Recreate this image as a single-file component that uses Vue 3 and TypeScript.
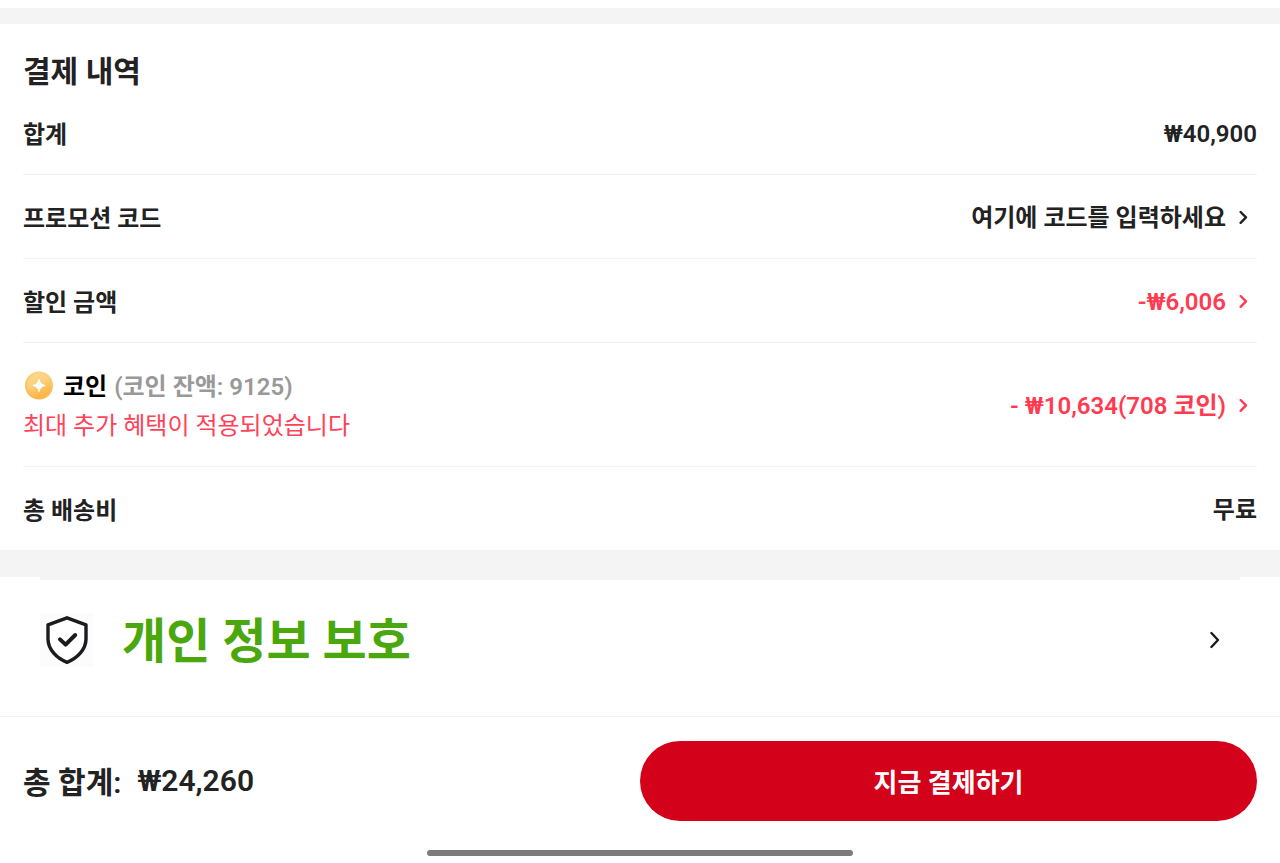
<script setup lang="ts">
interface SummaryRow {
  id: string
  label: string
  value: string
  action?: boolean
  sale?: boolean
  balance?: string
  note?: string
}

const rows: SummaryRow[] = [
  { id: 'subtotal', label: '합계', value: '₩40,900' },
  { id: 'promo', label: '프로모션 코드', value: '여기에 코드를 입력하세요', action: true },
  { id: 'discount', label: '할인 금액', value: '-₩6,006', action: true, sale: true },
  {
    id: 'coins',
    label: '코인',
    value: '- ₩10,634(708 코인)',
    action: true,
    sale: true,
    balance: '(코인 잔액: 9125)',
    note: '최대 추가 혜택이 적용되었습니다',
  },
  { id: 'shipping', label: '총 배송비', value: '무료' },
]
</script>

<template>
  <main class="checkout" lang="ko">
    <div class="band"></div>

    <section class="summary">
      <h1 class="title">결제 내역</h1>
      <div v-for="row in rows" :key="row.id" class="row">
        <div class="info">
          <div :id="`label-${row.id}`" class="label">
            <template v-if="row.balance">
              <svg class="coin" viewBox="0 0 32 32" aria-hidden="true">
                <defs>
                  <linearGradient id="coin-face" x1="0" y1="0" x2="0.4" y2="1">
                    <stop offset="0" stop-color="#fbd992" />
                    <stop offset="0.5" stop-color="#fbd07c" />
                    <stop offset="1" stop-color="#fcb646" />
                  </linearGradient>
                  <linearGradient id="coin-rim" x1="0" y1="0" x2="0" y2="1">
                    <stop offset="0" stop-color="#fbd27e" />
                    <stop offset="1" stop-color="#fbb54d" />
                  </linearGradient>
                </defs>
                <circle cx="16" cy="14.5" r="14" fill="url(#coin-rim)" />
                <circle cx="16" cy="14.5" r="12" fill="url(#coin-face)" />
                <path d="M16 8.3Q17 13.5 22.2 14.5Q17 15.5 16 20.7Q15 15.5 9.8 14.5Q15 13.5 16 8.3Z" fill="#fff" stroke="#fff" stroke-width="1" stroke-linejoin="round" />
              </svg>
              <span class="coin-name">{{ row.label }}</span>
              <span class="balance">{{ row.balance }}</span>
            </template>
            <template v-else>{{ row.label }}</template>
          </div>
          <p v-if="row.note" class="note">{{ row.note }}</p>
        </div>
        <button
          v-if="row.action"
          :id="`value-${row.id}`"
          type="button"
          class="value action"
          :class="{ sale: row.sale }"
          :aria-labelledby="`label-${row.id} value-${row.id}`"
        >
          <span>{{ row.value }}</span>
          <svg class="chevron" viewBox="0 0 14 20" aria-hidden="true">
            <path d="M4.6 4L10 9.4L4.6 14.8" />
          </svg>
        </button>
        <span v-else class="value">{{ row.value }}</span>
      </div>
    </section>

    <div class="band wide"></div>

    <section class="privacy">
      <button type="button" class="privacy-button">
        <svg class="shield" viewBox="0 0 54 54" aria-hidden="true">
          <rect width="54" height="54" fill="#fcfcfe" />
          <path d="M27 4.8L46 11.8V26C46 36.5 37 45.5 27 49.3C17 45.5 8 36.5 8 26V11.8Z" fill="#fff" stroke="#1b1b1d" stroke-width="3.4" stroke-linejoin="round" />
          <path d="M20 26.4L25.6 31.6L35.2 22" fill="none" stroke="#1b1b1d" stroke-width="4" stroke-linecap="round" stroke-linejoin="round" />
        </svg>
        <span class="privacy-text">개인 정보 보호</span>
        <svg class="privacy-chevron" viewBox="0 0 14 22" aria-hidden="true">
          <path d="M3.4 4L10 11L3.4 18" />
        </svg>
      </button>
    </section>

    <footer class="footer">
      <div class="total">
        <span class="total-label">총 합계:</span>
        <span>₩24,260</span>
      </div>
      <button type="button" class="pay">지금 결제하기</button>
    </footer>
    <div class="home-bar"></div>
  </main>
</template>

<style>
body {
  margin: 0;
  background: #fff;
}
</style>

<style scoped>
.checkout {
  padding-top: 8px;
  color: #222;
  background: #fff;
  font-family: Roboto, 'Noto Sans CJK KR', sans-serif;
  font-size: 24px;
  line-height: 36px;
}

button {
  margin: 0;
  padding: 0;
  border: 0;
  background: none;
  color: inherit;
  font: inherit;
  cursor: pointer;
}

.band {
  height: 16px;
  background: #f4f4f4;
}

.band.wide {
  height: 27px;
}

.summary {
  padding: 29px 23px 0;
}

.title {
  margin: 0;
  font-size: 30px;
  line-height: 38px;
  font-weight: 600;
}

.row {
  display: flex;
  align-items: center;
  justify-content: space-between;
  gap: 24px;
  padding: 25px 0 22px;
  border-bottom: 1px solid #f2f2f2;
  font-weight: 600;
}

.row:last-child {
  border-bottom: 0;
}

.label {
  display: flex;
  align-items: center;
  padding-top: 2px;
  line-height: 34px;
}

.coin {
  width: 32px;
  height: 32px;
  margin-right: 8px;
}

.coin-name {
  color: #000;
}

.balance {
  margin-left: 7px;
  color: #999;
}

.note {
  margin: 4px 0 0;
  color: #ff4258;
  font-weight: 400;
}

.value {
  text-align: right;
  white-space: nowrap;
}

.action {
  display: flex;
  align-items: center;
  gap: 10px;
  padding-right: 7px;
}

.sale {
  color: #ff3b52;
}

.chevron {
  width: 14px;
  height: 20px;
}

.chevron path,
.privacy-chevron path {
  fill: none;
  stroke: currentColor;
  stroke-width: 2.4;
  stroke-linecap: round;
  stroke-linejoin: round;
}

.privacy {
  padding: 0 40px;
}

.privacy-button {
  display: flex;
  align-items: center;
  width: 100%;
  padding: 25px 18px 42px 0;
  border-top: 3px solid #f4f4f4;
  text-align: left;
}

.shield {
  width: 54px;
  height: 54px;
}

.privacy-text {
  flex: 1;
  margin-left: 28px;
  padding-top: 4px;
  color: #4aa80e;
  font-size: 48px;
  line-height: 65px;
  font-weight: 700;
}

.privacy-chevron {
  width: 14px;
  height: 22px;
  color: #1b1b1d;
}

.footer {
  display: grid;
  grid-template-columns: 1fr 1fr;
  align-items: center;
  padding: 24px 23px 29px;
  border-top: 1px solid #f2f2f2;
}

.total {
  display: flex;
  gap: 16px;
  padding-top: 2px;
  font-size: 30px;
  line-height: 44px;
  font-weight: 600;
}

.total-label {
  padding-top: 2px;
}

.pay {
  height: 80px;
  padding-top: 4px;
  border-radius: 40px;
  background: #d3011a;
  color: #fff;
  font-size: 26px;
  font-weight: 700;
}

.home-bar {
  width: 33.3%;
  height: 6px;
  margin: 0 auto;
  border-radius: 3px;
  background: #7b7b7b;
}
</style>
